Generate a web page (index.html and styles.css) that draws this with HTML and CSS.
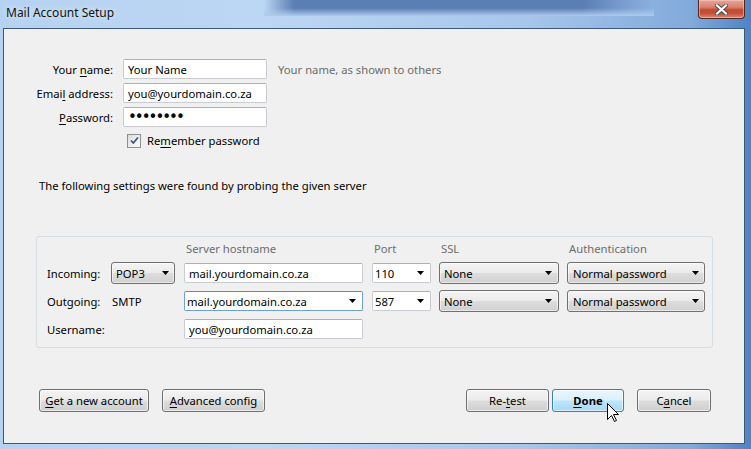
FILE: index.html
```html
<!DOCTYPE html>
<html lang="en">

<head>
    <meta charset="UTF-8">
    <meta name="viewport" content="width=device-width, initial-scale=1.0">
    <title>Mail Account Setup</title>
    <link rel="stylesheet" href="styles.css">
</head>

<body>
    <div id="window">
        <div id="titleBar">
            <span id="titleText">Mail Account Setup</span>
            <div id="closeButton">
                <svg width="13" height="11" viewBox="0 0 13 11">
                    <path d="M2 1.5 L11 9.5 M11 1.5 L2 9.5" stroke="#4a4a4a" stroke-width="4" stroke-linecap="square" />
                    <path d="M2 1.5 L11 9.5 M11 1.5 L2 9.5" stroke="#ffffff" stroke-width="2.2" stroke-linecap="square" />
                </svg>
            </div>
        </div>

        <div id="client">
            <!-- Identity fields -->
            <div class="identity-form">
                <label class="field-label">Your <u>n</u>ame:</label>
                <input class="textbox" type="text" value="Your Name" readonly>
                <span class="hint">Your name, as shown to others</span>

                <label class="field-label">Emai<u>l</u> address:</label>
                <input class="textbox" type="text" value="you@yourdomain.co.za" readonly>
                <span></span>

                <label class="field-label"><u>P</u>assword:</label>
                <input class="textbox password" type="password" value="password" readonly>
                <span></span>

                <div class="remember">
                    <span class="checkbox">
                        <svg width="11" height="11" viewBox="0 0 11 11">
                            <path d="M2 5.5 L4.3 8 L9 2.5" fill="none" stroke="#3b5485" stroke-width="1.7" />
                        </svg>
                    </span>
                    Re<u>m</u>ember password
                </div>
            </div>

            <p class="probe-note">The following settings were found by probing the given server</p>

            <!-- Server settings -->
            <div class="server-box">
                <span></span>
                <span></span>
                <span class="col-head">Server hostname</span>
                <span class="col-head">Port</span>
                <span class="col-head">SSL</span>
                <span class="col-head">Authentication</span>

                <span class="row-label">Incoming:</span>
                <div class="dropdown small"><span>POP3</span><i class="arrow"></i></div>
                <input class="textbox host" type="text" value="mail.yourdomain.co.za" readonly>
                <div class="combo port"><span>110</span><i class="arrow"></i></div>
                <div class="dropdown ssl"><span>None</span><i class="arrow"></i></div>
                <div class="dropdown auth"><span>Normal password</span><i class="arrow"></i></div>

                <span class="row-label">Outgoing:</span>
                <span class="protocol">SMTP</span>
                <div class="combo host focused"><span>mail.yourdomain.co.za</span><i class="arrow"></i></div>
                <div class="combo port"><span>587</span><i class="arrow"></i></div>
                <div class="dropdown ssl"><span>None</span><i class="arrow"></i></div>
                <div class="dropdown auth"><span>Normal password</span><i class="arrow"></i></div>

                <span class="row-label">Username:</span>
                <span></span>
                <input class="textbox host" type="text" value="you@yourdomain.co.za" readonly>
            </div>

            <!-- Dialog buttons -->
            <div class="actions">
                <button class="btn wide"><u>G</u>et a new account</button>
                <button class="btn advanced"><u>A</u>dvanced config</button>
                <button class="btn retest">Re-<u>t</u>est</button>
                <button class="btn done"><u>D</u>one</button>
                <button class="btn cancel">C<u>a</u>ncel</button>
            </div>
        </div>

        <svg class="cursor" width="13" height="20" viewBox="0 0 13 20">
            <path d="M0.5 0.5 L0.5 16.5 L4.5 12.5 L7.5 18.5 L9.5 17.5 L6.5 11.5 L11.5 11.5 Z" fill="#ffffff" stroke="#000000" stroke-width="1" stroke-linejoin="miter" />
        </svg>
    </div>
</body>

</html>
```

FILE: styles.css
```css
body {
  margin: 0;
  font-family: "Noto Sans", "Open Sans", sans-serif;
  font-size: 11.25px;
  color: #000;
}

#window {
  position: relative;
  width: 751px;
  height: 449px;
  display: flex;
  flex-direction: column;
  overflow: hidden;
  background: linear-gradient(90deg, #b5d2f1 0%, #bcd7f3 35%, #a7c6ea 70%, #82aadb 92%, #4f83c3 100%);
}

/* dark glass band behind the title, softened at the bottom by a light overlay */
#titleBar {
  height: 28px;
  flex-shrink: 0;
  display: flex;
  justify-content: space-between;
  align-items: flex-start;
  background:
    linear-gradient(180deg, rgba(174, 203, 236, 0) 8px, #aecbec 16px) 264px 0 / 390px 16px no-repeat,
    linear-gradient(90deg, rgba(91, 126, 180, 0) 0, #5b7eb4 30px, #5b7eb4 320px, rgba(91, 126, 180, 0) 390px) 264px 0 / 390px 16px no-repeat;
}

#titleText {
  padding: 5px 0 0 6px;
  line-height: 16px;
  font-size: 12px;
  color: #111;
  text-shadow: 0 0 6px rgba(255, 255, 255, 0.9);
}

#closeButton {
  width: 45px;
  height: 18px;
  margin-right: 6px;
  border: 1px solid #4f2620;
  border-top: none;
  border-radius: 0 0 4px 4px;
  display: flex;
  align-items: center;
  justify-content: center;
  background: linear-gradient(180deg, #e6a699 0%, #d9806d 40%, #c24a30 55%, #c6513a 75%, #d88a73 100%);
  box-shadow: inset 0 0 0 1px rgba(255, 210, 200, 0.5);
}

#client {
  flex: 1;
  margin: 0 6px 5px 3px;
  border: 1px solid #3c5876;
  background-color: #f0f0f0;
  display: flex;
  flex-direction: column;
}

u {
  text-underline-offset: 2px;
}

/* identity block */
.identity-form {
  margin-top: 30px;
  display: grid;
  grid-template-columns: 109px 144px auto;
  grid-auto-rows: 20px;
  column-gap: 10px;
  row-gap: 4px;
  align-items: center;
}

.field-label {
  text-align: right;
}

.hint {
  padding-left: 1px;
  color: #6d6d6d;
}

.textbox {
  box-sizing: border-box;
  height: 20px;
  width: 144px;
  margin: 0;
  padding: 0 4px;
  border: 1px solid #c9ccd2;
  border-top-color: #adb0b6;
  border-radius: 2px;
  background-color: #fff;
  font: inherit;
  color: #000;
  outline: none;
}

.password {
  font-family: "DejaVu Sans", sans-serif;
  font-size: 15px;
  letter-spacing: -2px;
}

.remember {
  grid-column: 2 / span 2;
  display: flex;
  align-items: center;
  padding-left: 4px;
  margin-top: -1px;
}

.checkbox {
  width: 12px;
  height: 12px;
  margin-right: 6px;
  border: 1px solid #8e8f8f;
  background: linear-gradient(135deg, #dcdcdc, #fdfdfd);
  display: flex;
  align-items: center;
  justify-content: center;
}

.probe-note {
  margin: 27px 0 0 35px;
  line-height: 16px;
}

/* server settings box */
.server-box {
  margin: 42px 0 0 32px;
  width: 677px;
  box-sizing: border-box;
  border: 1px solid #d6dde3;
  border-radius: 3px;
  padding: 3px 7px 7px 10px;
  display: grid;
  grid-template-columns: 64px 73px 188px 67px 128px 138px;
  grid-template-rows: 16px 22px 22px 22px;
  row-gap: 6px;
  align-items: center;
}

.col-head {
  padding-left: 2px;
  color: #6d6d6d;
}

.protocol {
  padding-left: 1px;
}

.dropdown,
.combo {
  box-sizing: border-box;
  display: flex;
  align-items: center;
  justify-content: space-between;
}

.dropdown {
  height: 22px;
  padding: 0 5px 0 4px;
  border: 1px solid #707070;
  border-radius: 3px;
  background: linear-gradient(180deg, #f4f4f4 0%, #ebebeb 48%, #dddddd 52%, #d0d0d0 100%);
  box-shadow: inset 0 0 0 1px rgba(255, 255, 255, 0.55);
}

.combo {
  height: 20px;
  padding: 0 6px 0 2px;
  border: 1px solid #c9ccd2;
  border-top-color: #adb0b6;
  border-radius: 2px;
  background-color: #fff;
}

.combo.focused {
  border-color: #6f9fd3;
  border-top-color: #5a8cc4;
}

.arrow {
  width: 7px;
  height: 4px;
  background-color: #000;
  clip-path: polygon(0 0, 100% 0, 50% 100%);
}

.small {
  width: 64px;
}

.host {
  width: 179px;
}

.port {
  width: 59px;
}

.ssl {
  width: 120px;
  padding-right: 6px;
}

.auth {
  width: 138px;
  padding-left: 5px;
}

/* bottom buttons */
.actions {
  margin-top: auto;
  padding: 0 33px 31px 35px;
  display: flex;
}

.btn {
  box-sizing: border-box;
  height: 23px;
  padding: 0;
  border: 1px solid #707070;
  border-radius: 3px;
  background: linear-gradient(180deg, #f3f3f3 0%, #ebebeb 48%, #dddddd 52%, #cfcfcf 100%);
  box-shadow: inset 0 0 0 1px rgba(255, 255, 255, 0.6);
  font: inherit;
  color: #000;
}

.wide {
  width: 110px;
}

.advanced {
  width: 103px;
  margin-left: 13px;
}

.retest {
  width: 83px;
  margin-left: auto;
}

.done {
  width: 72px;
  margin-left: 3px;
  font-weight: bold;
  border-color: #3c7fb1;
  background: linear-gradient(180deg, #eaf6fd 0%, #d9f0fc 48%, #bee6fd 52%, #a7d9f5 100%);
}

.cancel {
  width: 74px;
  margin-left: 13px;
}

.cursor {
  position: absolute;
  left: 607px;
  top: 403px;
}
```
